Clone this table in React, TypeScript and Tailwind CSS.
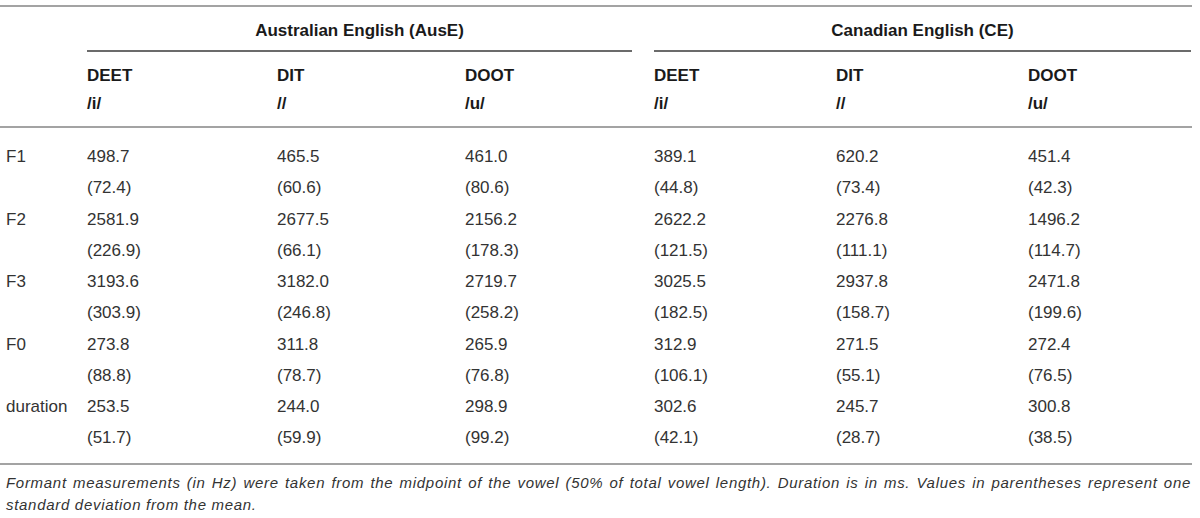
const cols = 'grid grid-cols-[81px_190px_188px_189px_182px_192px_170px]'

const groups = ['Australian English (AusE)', 'Canadian English (CE)']

const heads = [
  ['DEET', '/i/'],
  ['DIT', '//'],
  ['DOOT', '/u/'],
  ['DEET', '/i/'],
  ['DIT', '//'],
  ['DOOT', '/u/'],
]

const rows: { label: string; mean: string[]; sd: string[] }[] = [
  {
    label: 'F1',
    mean: ['498.7', '465.5', '461.0', '389.1', '620.2', '451.4'],
    sd: ['(72.4)', '(60.6)', '(80.6)', '(44.8)', '(73.4)', '(42.3)'],
  },
  {
    label: 'F2',
    mean: ['2581.9', '2677.5', '2156.2', '2622.2', '2276.8', '1496.2'],
    sd: ['(226.9)', '(66.1)', '(178.3)', '(121.5)', '(111.1)', '(114.7)'],
  },
  {
    label: 'F3',
    mean: ['3193.6', '3182.0', '2719.7', '3025.5', '2937.8', '2471.8'],
    sd: ['(303.9)', '(246.8)', '(258.2)', '(182.5)', '(158.7)', '(199.6)'],
  },
  {
    label: 'F0',
    mean: ['273.8', '311.8', '265.9', '312.9', '271.5', '272.4'],
    sd: ['(88.8)', '(78.7)', '(76.8)', '(106.1)', '(55.1)', '(76.5)'],
  },
  {
    label: 'duration',
    mean: ['253.5', '244.0', '298.9', '302.6', '245.7', '300.8'],
    sd: ['(51.7)', '(59.9)', '(99.2)', '(42.1)', '(28.7)', '(38.5)'],
  },
]

export default function App() {
  return (
    <div className="h-[518px] w-[1200px] overflow-hidden bg-white pt-[5px] font-['Liberation_Sans',Arial,sans-serif] text-[#333]">
      <div className="w-[1192px]">
        {/* group headers */}
        <div className="grid grid-cols-[81px_567px_544px] border-t-2 border-[#a3a3a3]">
          <div />
          {groups.map((g, i) => (
            <div key={g} className="pt-[14px]">
              <div
                className={
                  'ml-[6px] border-b-2 border-[#6b6b6b] pb-[9px] text-center text-[17px] font-bold leading-[20px] text-[#1a1a1a] ' +
                  (i === 0 ? 'mr-[16px]' : 'mr-[1px]')
                }
              >
                {g}
              </div>
            </div>
          ))}
        </div>

        {/* column headers */}
        <div className={cols + ' border-b-2 border-[#a3a3a3] pt-[14px] pb-[12px]'}>
          <div />
          {heads.map(([word, ipa], i) => (
            <div key={i} className="flex flex-col gap-[8px] pl-[6px] text-[17px] font-bold leading-[20px] text-[#1a1a1a]">
              <span>{word}</span>
              <span>{ipa}</span>
            </div>
          ))}
        </div>

        {/* body */}
        <div className="border-b-2 border-[#a3a3a3] pt-[13px] pb-[9px] text-[17px] leading-[31.25px]">
          {rows.map((r) => (
            <div key={r.label}>
              <div className={cols}>
                <div className="pl-[6px]">{r.label}</div>
                {r.mean.map((v, i) => (
                  <div key={i} className="pl-[6px]">{v}</div>
                ))}
              </div>
              <div className={cols}>
                <div />
                {r.sd.map((v, i) => (
                  <div key={i} className="pl-[6px]">{v}</div>
                ))}
              </div>
            </div>
          ))}
        </div>

        {/* footnote */}
        <div className="pt-[7px] pl-[6px] pr-[1px] text-[15px] italic leading-[22px] tracking-[0.7px] text-[#333]">
          <div className="whitespace-nowrap text-justify [text-align-last:justify]">
            Formant measurements (in Hz) were taken from the midpoint of the vowel (50% of total vowel length). Duration is in ms. Values in parentheses represent one
          </div>
          <div>standard deviation from the mean.</div>
        </div>
      </div>
    </div>
  )
}
